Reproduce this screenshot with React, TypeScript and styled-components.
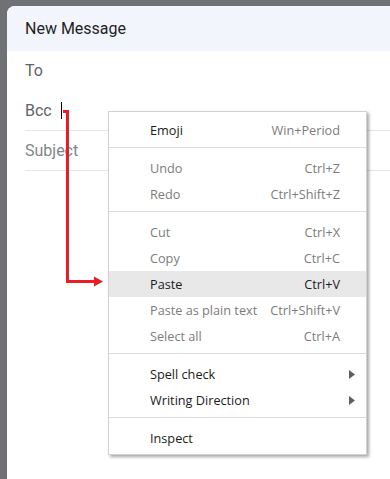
import React from 'react';
import styled, { createGlobalStyle } from 'styled-components';

const GlobalStyle = createGlobalStyle`
    html, body {
        margin: 0;
        padding: 0;
        overflow: hidden;
        background: #6f7174;
    }
`;

const Backdrop = styled.div`
    width: 390px;
    height: 479px;
    box-sizing: border-box;
    padding: 6px 0 0 7px;
    display: flex;
    background: #6f7174;
`;

const Dialog = styled.div`
    position: relative;
    flex: 1;
    display: flex;
    flex-direction: column;
    background: white;
    border-top-left-radius: 8px;
    overflow: hidden;
    font-family: Roboto, "Liberation Sans", sans-serif;
`;

const Header = styled.div`
    height: 45px;
    display: flex;
    align-items: center;
    padding-left: 18px;
    background: #f2f6fc;
    color: #1f1f1f;
    font-size: 16px;
`;

const Field = styled.div<{ $line?: boolean; $muted?: boolean }>`
    height: 39px;
    margin-left: 18px;
    display: flex;
    align-items: center;
    font-size: 16px;
    color: ${p => (p.$muted ? '#80868b' : '#5f6368')};
    border-bottom: 1px solid ${p => (p.$line ? '#e6e6e6' : 'transparent')};
`;

const Caret = styled.span`
    width: 1px;
    height: 17px;
    margin-left: 9px;
    background: #000;
`;

const Menu = styled.div`
    position: absolute;
    left: 101px;
    top: 105px;
    width: 257px;
    padding: 5px 0 3px;
    background: white;
    border: 1px solid #d2d2d2;
    box-shadow: 2px 2px 3px rgba(0, 0, 0, 0.35);
    font-family: "Open Sans", "Noto Sans", sans-serif;
    font-size: 12.7px;
`;

const Item = styled.div<{ $enabled?: boolean; $active?: boolean }>`
    height: 26px;
    display: flex;
    align-items: center;
    justify-content: space-between;
    padding: 0 26px 0 41px;
    color: ${p => (p.$enabled ? '#1b1b1b' : '#7c7c7c')};
    background: ${p => (p.$active ? '#e8e8e8' : 'transparent')};
`;

const Shortcut = styled.span<{ $dark?: boolean }>`
    color: ${p => (p.$dark ? '#1b1b1b' : '#7c7c7c')};
`;

const Separator = styled.div`
    height: 1px;
    margin: 4px 0 7px;
    background: #dcdcdc;
`;

const SubArrow = styled.svg`
    width: 6px;
    height: 9px;
    margin-right: -15px;
`;

const Pointer = styled.svg`
    position: absolute;
    left: 0;
    top: 0;
    pointer-events: none;
`;

type Entry = { label: string; key?: string; enabled?: boolean; active?: boolean; sub?: boolean } | 'sep';

const entries: Entry[] = [
    { label: 'Emoji', key: 'Win+Period', enabled: true },
    'sep',
    { label: 'Undo', key: 'Ctrl+Z' },
    { label: 'Redo', key: 'Ctrl+Shift+Z' },
    'sep',
    { label: 'Cut', key: 'Ctrl+X' },
    { label: 'Copy', key: 'Ctrl+C' },
    { label: 'Paste', key: 'Ctrl+V', enabled: true, active: true },
    { label: 'Paste as plain text', key: 'Ctrl+Shift+V' },
    { label: 'Select all', key: 'Ctrl+A' },
    'sep',
    { label: 'Spell check', enabled: true, sub: true },
    { label: 'Writing Direction', enabled: true, sub: true },
    'sep',
    { label: 'Inspect', enabled: true },
];

function ContextMenu() {
    return (
        <Menu>
            {entries.map((e, i) =>
                e === 'sep' ? (
                    <Separator key={i} />
                ) : (
                    <Item key={i} $enabled={e.enabled} $active={e.active}>
                        <span>{e.label}</span>
                        {e.key && <Shortcut $dark={e.active}>{e.key}</Shortcut>}
                        {e.sub && (
                            <SubArrow viewBox="0 0 6 9">
                                <path d="M0 0 L6 4.5 L0 9 Z" fill="#5f5f5f" />
                            </SubArrow>
                        )}
                    </Item>
                )
            )}
        </Menu>
    );
}

export default function App() {
    return (
        <Backdrop>
            <GlobalStyle />
            <Dialog>
                <Header>New Message</Header>
                <Field>To</Field>
                <Field $line>
                    Bcc
                    <Caret />
                </Field>
                <Field $line $muted>Subject</Field>
                <ContextMenu />
                <Pointer width="383" height="473" viewBox="0 0 383 473">
                    <path
                        d="M56 105.5 H60.5 V275.5 H89"
                        fill="none"
                        stroke="#ec1c24"
                        strokeWidth="3"
                    />
                    <path d="M87 270.5 L96 275.5 L87 280.5 Z" fill="#ec1c24" />
                </Pointer>
            </Dialog>
        </Backdrop>
    );
}
